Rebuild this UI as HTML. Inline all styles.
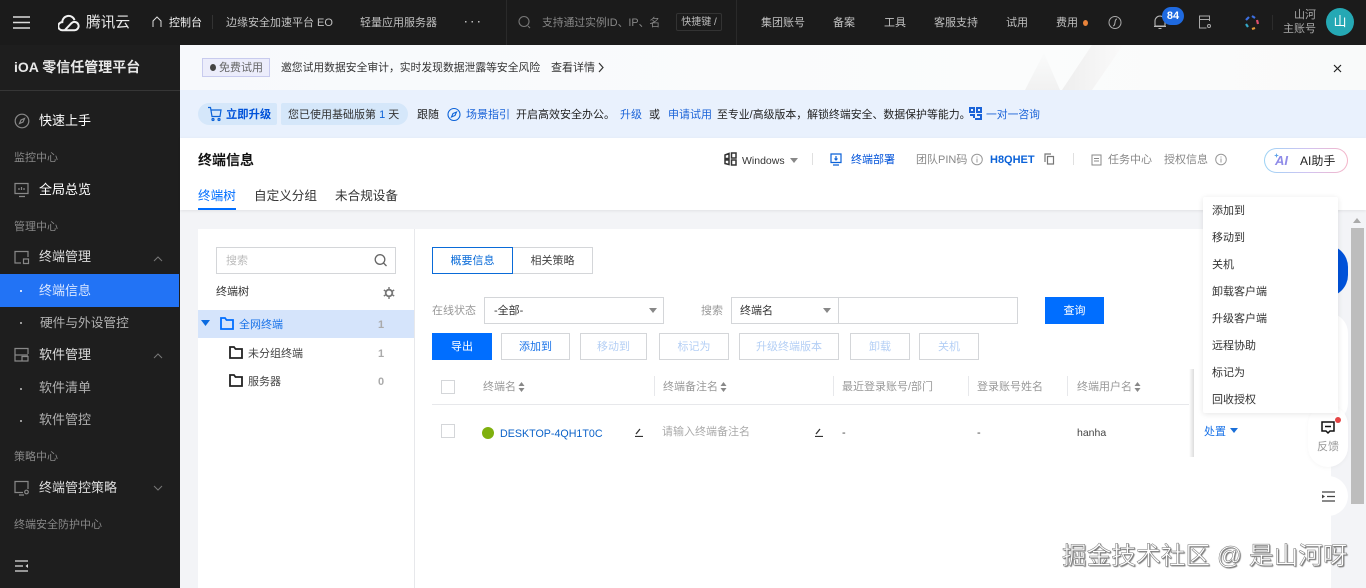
<!DOCTYPE html>
<html lang="zh"><head><meta charset="utf-8"><title>终端信息</title>
<style>
*{box-sizing:border-box}
html,body{margin:0;padding:0;width:1366px;height:588px;overflow:hidden;background:#f3f4f7}
body{position:relative;font-family:"Liberation Sans","Noto Sans CJK SC",sans-serif;font-size:12px;color:#333}
.a,.t,svg.i{position:absolute}
.t{line-height:20px;white-space:nowrap;margin-top:2px}
.s{font-size:14px;color:#fff}.g{color:#888;font-size:11px}
.btn{position:absolute;top:333px;height:27px;border:1px solid #d4d6d9;background:#fff;color:#b4cff5;text-align:center;line-height:26px;font-size:11px;white-space:nowrap}
.hd{color:#999;font-size:11px}
.bl{color:#0052d9}.lb{color:#006eff}
.m{left:1212px;font-size:11px;color:#333}
.nv{top:11px;font-size:11px;color:#c0c0c0}
svg{fill:none;stroke:currentColor}
</style></head><body>
<!-- top bar -->
<div class="a" style="left:0;top:0;width:1366px;height:45px;background:#1b1b1b"></div>
<svg class="i" style="left:13px;top:16px;color:#ddd" width="17" height="13" stroke-width="1.500"><path d="M0 1h17M0 6.500h17M0 12h17"/></svg>
<svg class="i" style="left:58px;top:13px;color:#f1f1f1" width="24" height="19" viewBox="0 0 20 16" stroke-width="1.700"><path d="M3.500 14.500a3.400 3.400 0 0 1 0-6.800A5.300 5.300 0 0 1 13.800 6M3.500 14.500h10.300a3.500 3.500 0 1 0-2.500-6L5.800 14.300"/></svg>
<span class="t" style="left:86px;top:11px;font-size:14.700px;color:#e8e8e8">腾讯云</span>
<svg class="i" style="left:152px;top:16px;color:#ddd" width="10" height="12" stroke-width="1"><path d="M1 11V5l4-4 4 4v6"/></svg>
<span class="t" style="left:169px;top:11px;font-size:11px;color:#f0f0f0">控制台</span>
<div class="a" style="left:212px;top:15px;width:1px;height:14px;background:#333"></div>
<span class="t nv" style="left:226px">边缘安全加速平台 EO</span>
<span class="t nv" style="left:360px">轻量应用服务器</span>
<svg class="i" style="left:465px;top:21px" width="16" height="3"><path d="M0 0h1.500v1.500H0zM6.500 0H8v1.500H6.500zM13 0h1.500v1.500H13z" fill="#bbb" stroke="none"/></svg>
<div class="a" style="left:506px;top:0;width:1px;height:45px;background:#2a2a2a"></div>
<svg class="i" style="left:518px;top:15px;color:#777" width="14" height="15" stroke-width="1.100"><circle cx="6" cy="6.500" r="5"/><path d="M10 11l2 2"/></svg>
<span class="t" style="left:542px;top:11px;font-size:10.800px;color:#888">支持通过实例ID、IP、名</span>
<span class="a" style="left:676px;top:13px;width:46px;height:18px;border:1px solid #333;border-radius:2px;font-size:10px;color:#bbb;line-height:17px;text-align:center;white-space:nowrap">快捷键 /</span>
<div class="a" style="left:736px;top:0;width:1px;height:45px;background:#2a2a2a"></div>
<span class="t nv" style="left:761px">集团账号</span>
<span class="t nv" style="left:833px">备案</span>
<span class="t nv" style="left:884px">工具</span>
<span class="t nv" style="left:934px">客服支持</span>
<span class="t nv" style="left:1006px">试用</span>
<span class="t nv" style="left:1056px">费用</span>
<div class="a" style="left:1083px;top:20px;width:5px;height:6px;border-radius:50%;background:#e8833a"></div>
<svg class="i" style="left:1108px;top:15px;color:#aaa" width="14" height="15" stroke-width="1"><circle cx="7" cy="7.500" r="6"/><path d="M5 11c3 0 1-7 4-7"/></svg>
<svg class="i" style="left:1153px;top:15px;color:#bbb" width="14" height="15" stroke-width="1.100"><path d="M2 11V6a5 5 0 0 1 10 0v5zM1 11.500h12M5.500 13.500h3"/></svg>
<div class="a" style="left:1162px;top:7px;width:22px;height:18px;border-radius:9px;background:#1f6ae0;color:#fff;font-size:11px;font-weight:bold;line-height:18px;text-align:center">84</div>
<svg class="i" style="left:1198px;top:15px;color:#aaa" width="14" height="14" stroke-width="1"><path d="M11.500 6V1h-10v12h7M1.500 4.500h10"/><circle cx="11" cy="11" r="1.500"/></svg>
<svg class="i" style="left:1243px;top:14px" width="17" height="17" stroke-width="2.200"><path d="M9 2l3 2" stroke="#3d6fe0"/><path d="M14 6l1 4" stroke="#e0506e"/><path d="M12 14l-3 1" stroke="#e59a3a"/><path d="M5 13L3 10" stroke="#34a8c9"/><path d="M3 6l3-3" stroke="#3d6fe0"/></svg>
<div class="a" style="left:1272px;top:15px;width:1px;height:15px;background:#2c2c2c"></div>
<span class="t" style="left:1294px;top:6px;font-size:11px;color:#aaa;line-height:14px">山河</span>
<span class="t" style="left:1283px;top:20px;font-size:11px;color:#aaa;line-height:14px">主账号</span>
<div class="a" style="left:1326px;top:8px;width:28px;height:28px;border-radius:50%;background:#25a8b4;color:#fff;font-size:13px;line-height:28px;text-align:center">山</div>
<!-- sidebar -->
<div class="a" style="left:0;top:45px;width:180px;height:543px;background:#1e1e1e"></div>
<span class="t" style="left:14px;top:55px;font-size:14px;font-weight:bold;color:#e8e8e8">iOA 零信任管理平台</span>
<div class="a" style="left:0;top:90px;width:180px;height:1px;background:#363636"></div>
<svg class="i" style="left:14px;top:113px;color:#888" width="16" height="16" stroke-width="1.200"><circle cx="8" cy="8" r="6.800"/><path d="M10.500 5.500l-1.500 3.500-3.500 1.500 1.500-3.500z"/></svg>
<span class="t s" style="left:39px;top:109px;font-size:13px">快速上手</span>
<span class="t g" style="left:14px;top:146px">监控中心</span>
<svg class="i" style="left:14px;top:182px;color:#888" width="16" height="16" stroke-width="1.200"><path d="M1 1.500h13v10H1zM5 14.500h6M5 8V6M7.500 8V5M10 8V6"/></svg>
<span class="t s" style="left:39px;top:178px;font-size:13px">全局总览</span>
<span class="t g" style="left:14px;top:215px">管理中心</span>
<svg class="i" style="left:14px;top:250px;color:#888" width="16" height="15" stroke-width="1.200"><path d="M7 13H1V1.500h13V7M9.500 9h5v4.500h-5z"/></svg>
<span class="t s" style="left:39px;top:245px;font-size:13px;color:#ddd">终端管理</span>
<svg class="i" style="left:153px;top:256px;color:#777" width="10" height="6" stroke-width="1"><path d="M1 5l4-4 4 4"/></svg>
<div class="a" style="left:0;top:274px;width:179px;height:33px;background:#2273f5"></div>
<div class="a" style="left:20px;top:290px;width:2px;height:2px;background:#cfe0ff"></div>
<span class="t s" style="left:39px;top:279px;font-size:13px;color:#d8e6ff">终端信息</span>
<div class="a" style="left:20px;top:322px;width:2px;height:2px;background:#999"></div>
<span class="t s" style="left:40px;top:311px;font-size:12.700px;color:#b0b0b0">硬件与外设管控</span>
<svg class="i" style="left:14px;top:347px;color:#888" width="16" height="15" stroke-width="1.200"><path d="M7 14H1V1.500h13V7M1 8h13M1.500 14h13M8 14V9.500h6V14"/></svg>
<span class="t s" style="left:39px;top:343px;font-size:13px;color:#ddd">软件管理</span>
<svg class="i" style="left:153px;top:353px;color:#777" width="10" height="6" stroke-width="1"><path d="M1 5l4-4 4 4"/></svg>
<div class="a" style="left:20px;top:388px;width:2px;height:2px;background:#999"></div>
<span class="t s" style="left:39px;top:376px;font-size:13px;color:#b0b0b0">软件清单</span>
<div class="a" style="left:20px;top:420px;width:2px;height:2px;background:#999"></div>
<span class="t s" style="left:39px;top:408px;font-size:13px;color:#b0b0b0">软件管控</span>
<span class="t g" style="left:14px;top:445px">策略中心</span>
<svg class="i" style="left:14px;top:480px;color:#888" width="16" height="16" stroke-width="1.200"><path d="M9 12.500H1V1.500h13V9M5 15h5"/><circle cx="12.500" cy="12" r="1.800"/></svg>
<span class="t s" style="left:39px;top:476px;font-size:13px;color:#ddd">终端管控策略</span>
<svg class="i" style="left:153px;top:485px;color:#777" width="10" height="6" stroke-width="1"><path d="M1 1l4 4 4-4"/></svg>
<span class="t g" style="left:14px;top:513px">终端安全防护中心</span>
<svg class="i" style="left:15px;top:560px;color:#ddd" width="14" height="12" stroke-width="1.300"><path d="M0 1h13M0 6h8M0 11h13"/><path d="M13 4l-2.500 2 2.500 2z" fill="currentColor" stroke="none"/></svg>
<!-- notice 1 -->
<div class="a" style="left:180px;top:45px;width:1186px;height:45px;background:linear-gradient(90deg,#f7f9fc 0,#fbfcfc 70%,#f9fafa 100%)"></div>
<svg class="i" style="left:1000px;top:45px" width="200" height="45"><defs><linearGradient id="b"><stop offset="0" stop-color="#eeeeee"/><stop offset="1" stop-color="#fafafa"/></linearGradient><linearGradient id="c" x2="0" y2="1"><stop offset="0" stop-color="#fafbfb"/><stop offset="1" stop-color="#f1f1f1"/></linearGradient></defs><path d="M92 0h31L92 45H62z" fill="url(#b)" stroke="none"/><path d="M44 8l16 37H25z" fill="url(#c)" stroke="none"/></svg>
<div class="a" style="left:202px;top:58px;width:68px;height:19px;background:#ecedfb;border:1px solid #c8cbee"></div>
<div class="a" style="left:210px;top:64px;width:6px;height:7px;border-radius:50%;background:#444"></div>
<span class="t" style="left:219px;top:56px;font-size:11px;color:#666">免费试用</span>
<span class="t" style="left:281px;top:56px;font-size:10.800px;color:#333">邀您试用数据安全审计，实时发现数据泄露等安全风险</span>
<span class="t" style="left:551px;top:56px;color:#333;font-size:11px">查看详情</span>
<svg class="i" style="left:598px;top:62px;color:#333" width="6" height="11" stroke-width="1.200"><path d="M1 1l4 4.500L1 10"/></svg>
<svg class="i" style="left:1333px;top:64px;color:#222" width="9" height="9" stroke-width="1.200"><path d="M1 1l7 7M8 1L1 8"/></svg>
<!-- notice 2 -->
<div class="a" style="left:180px;top:90px;width:1186px;height:48px;background:#e9f1fd"></div>
<div class="a" style="left:198px;top:103px;width:79px;height:22px;background:#d5e7fa;border-radius:11px 2px 2px 11px"></div>
<div class="a" style="left:281px;top:103px;width:127px;height:22px;background:#d5e7fa;border-radius:2px 11px 11px 2px"></div>
<svg class="i" style="left:207px;top:106px;color:#0b62d8" width="15" height="16" stroke-width="1.200"><path d="M1 1.500h2.500l1.500 9h8l1-6.500H4"/><circle cx="6" cy="13.500" r="1"/><circle cx="12" cy="13.500" r="1"/></svg>
<span class="t bl" style="left:226px;top:103px;font-size:11.300px;font-weight:bold">立即升级</span>
<span class="t" style="left:288px;top:103px;font-size:11px;color:#333">您已使用基础版第 <span style="color:#0b62d8">1</span> 天</span>
<span class="t" style="left:417px;top:103px;font-size:11px;color:#222">跟随</span>
<svg class="i" style="left:447px;top:107px;color:#0b62d8" width="14" height="15" stroke-width="1.100"><circle cx="7" cy="7.500" r="6"/><path d="M9.500 5l-1.500 3.500L4.500 10 6 6.500z"/></svg>
<span class="t" style="left:466px;top:103px;font-size:11px;color:#1a63d8">场景指引</span>
<span class="t" style="left:516px;top:103px;font-size:11px;color:#222">开启高效安全办公。</span>
<span class="t" style="left:620px;top:103px;font-size:11px;color:#1a63d8">升级</span>
<span class="t" style="left:649px;top:103px;font-size:11px;color:#222">或</span>
<span class="t" style="left:668px;top:103px;font-size:11px;color:#1a63d8">申请试用</span>
<span class="t" style="left:717px;top:103px;font-size:10.900px;color:#222">至专业/高级版本，解锁终端安全、数据保护等能力。</span>
<svg class="i" style="left:969px;top:107px;color:#1a63d8" width="13" height="14" stroke-width="2"><path d="M1 1h4v4H1zM8 1h4v4H8zM1 8h4v3M8 8h4v4H6"/></svg>
<span class="t" style="left:986px;top:103px;font-size:10.800px;color:#1a63d8">一对一咨询</span>
<!-- header -->
<div class="a" style="left:180px;top:138px;width:1186px;height:72px;background:#fff;box-shadow:0 1px 3px rgba(0,0,0,.08)"></div>
<span class="t" style="left:198px;top:148px;font-size:14px;font-weight:bold;color:#111">终端信息</span>
<span class="t lb" style="left:198px;top:184px;font-size:12.600px">终端树</span>
<div class="a" style="left:198px;top:208px;width:38px;height:2px;background:#006eff"></div>
<span class="t" style="left:254px;top:184px;font-size:12.600px;color:#333">自定义分组</span>
<span class="t" style="left:335px;top:184px;font-size:12.600px;color:#333">未合规设备</span>
<svg class="i" style="left:724px;top:152px;color:#333" width="13" height="14" stroke-width="1.500"><path d="M1 3l4-1.500V6.500H1zM7.500 1H12v5H7.500zM1 8h4v4.500l-4-1zM7.500 8H12v5H7.500z"/></svg>
<span class="t" style="left:742px;top:149px;font-size:10.500px;color:#333">Windows</span>
<svg class="i" style="left:790px;top:158px" width="8" height="5"><path d="M0 0h8L4 5z" fill="#888" stroke="none"/></svg>
<div class="a" style="left:812px;top:153px;width:1px;height:12px;background:#e0e0e0"></div>
<svg class="i" style="left:830px;top:153px;color:#0b62d8" width="12" height="13" stroke-width="1.200"><path d="M1 1h10v8.500H1zM3 12h6M6 3v4M4.500 5.500L6 7l1.500-1.500"/></svg>
<span class="t bl" style="left:851px;top:148px;font-size:11px">终端部署</span>
<span class="t" style="left:916px;top:148px;font-size:11px;color:#888">团队PIN码</span>
<svg class="i" style="left:971px;top:153px;color:#999" width="12" height="13" stroke-width="1"><circle cx="6" cy="6.500" r="5.300"/><path d="M6 5.500v4M6 3.500v1"/></svg>
<span class="t bl" style="left:990px;top:148px;font-size:11px;font-weight:bold;color:#0b62d8">H8QHET</span>
<svg class="i" style="left:1044px;top:153px;color:#777" width="11" height="12" stroke-width="1.200"><path d="M1 9V1h6M3.500 3.500h6v7.500h-6z"/></svg>
<div class="a" style="left:1073px;top:153px;width:1px;height:12px;background:#e0e0e0"></div>
<svg class="i" style="left:1091px;top:154px;color:#888" width="11" height="12" stroke-width="1"><path d="M1 1h9v10H1zM3 4.500h5M3 7h5"/></svg>
<span class="t" style="left:1108px;top:148px;font-size:11px;color:#888">任务中心</span>
<span class="t" style="left:1164px;top:148px;font-size:11px;color:#888">授权信息</span>
<svg class="i" style="left:1215px;top:153px;color:#999" width="12" height="13" stroke-width="1"><circle cx="6" cy="6.500" r="5.300"/><path d="M6 5.500v4M6 3.500v1"/></svg>
<div class="a" style="left:1264px;top:148px;width:84px;height:25px;border-radius:13px;background:linear-gradient(#fff,#fff) padding-box,linear-gradient(90deg,#9cd3f5,#cfc4f2,#f5b5c8) border-box;border:1px solid transparent"></div>
<span class="t" style="left:1275px;top:149px;font-size:13px;font-weight:bold;font-style:italic;color:#8f8be8">AI</span>
<svg class="i" style="left:1274px;top:153px" width="5" height="5"><path d="M2.500 0l.6 1.900L5 2.500l-1.900.6L2.500 5l-.6-1.900L0 2.500l1.900-.6z" fill="#5aa0e8" stroke="none"/></svg>
<span class="t" style="left:1300px;top:149px;font-size:12px;color:#222">AI助手</span>
<!-- panels -->
<div class="a" style="left:198px;top:229px;width:1133px;height:359px;background:#fff"></div>
<div class="a" style="left:414px;top:229px;width:1px;height:359px;background:#e7e8eb"></div>
<!-- tree -->
<div class="a" style="left:216px;top:247px;width:180px;height:27px;border:1px solid #d4d6d9"></div>
<span class="t" style="left:226px;top:249px;font-size:11px;color:#bbb">搜索</span>
<svg class="i" style="left:374px;top:253px;color:#666" width="14" height="15" stroke-width="1.300"><circle cx="6" cy="6.500" r="4.800"/><path d="M9.500 10l3 3"/></svg>
<span class="t" style="left:216px;top:280px;font-size:11px;color:#333">终端树</span>
<svg class="i" style="left:383px;top:287px;color:#777" width="12" height="12" stroke-width="1.800"><circle cx="6" cy="6" r="3.300"/><path d="M6 0v2M6 10v2M.8 3l1.700 1M9.500 8l1.700 1M.8 9l1.700-1M9.500 4l1.700-1" stroke-width="1.400"/></svg>
<div class="a" style="left:198px;top:310px;width:216px;height:28px;background:#d5e4fb"></div>
<svg class="i" style="left:201px;top:320px" width="9" height="6"><path d="M0 0h9L4.500 6z" fill="#0b6be0" stroke="none"/></svg>
<svg class="i" style="left:220px;top:317px;color:#006eff" width="14" height="13" stroke-width="1.800"><path d="M1 12V1h4l1.500 2H13v9z"/></svg>
<span class="t lb" style="left:239px;top:313px;font-size:11px;color:#1a73e8">全网终端</span>
<span class="t" style="left:378px;top:313px;font-size:11px;color:#aaa;font-weight:bold">1</span>
<svg class="i" style="left:229px;top:346px;color:#222" width="14" height="13" stroke-width="1.800"><path d="M1 12V1h4l1.500 2H13v9z"/></svg>
<span class="t" style="left:248px;top:342px;font-size:11px;color:#444">未分组终端</span>
<span class="t" style="left:378px;top:342px;font-size:11px;color:#aaa;font-weight:bold">1</span>
<svg class="i" style="left:229px;top:374px;color:#222" width="14" height="13" stroke-width="1.800"><path d="M1 12V1h4l1.500 2H13v9z"/></svg>
<span class="t" style="left:248px;top:370px;font-size:11px;color:#444">服务器</span>
<span class="t" style="left:378px;top:370px;font-size:11px;color:#aaa;font-weight:bold">0</span>
<!-- main tabs -->
<div class="a" style="left:432px;top:247px;width:81px;height:27px;border:1px solid #0a6bd8;color:#0a6bd8;font-size:11px;line-height:27px;text-align:center">概要信息</div>
<div class="a" style="left:513px;top:247px;width:80px;height:27px;border:1px solid #d4d6d9;border-left:0;color:#444;font-size:11px;line-height:27px;text-align:center">相关策略</div>
<!-- filters -->
<span class="t" style="left:432px;top:299px;font-size:11px;color:#999">在线状态</span>
<div class="a" style="left:484px;top:297px;width:180px;height:27px;border:1px solid #d4d6d9"></div>
<span class="t" style="left:494px;top:299px;font-size:11px;color:#333">-全部-</span>
<svg class="i" style="left:649px;top:308px" width="8" height="5"><path d="M0 0h8L4 5z" fill="#888" stroke="none"/></svg>
<span class="t" style="left:701px;top:299px;font-size:11px;color:#999">搜索</span>
<div class="a" style="left:731px;top:297px;width:287px;height:27px;border:1px solid #d4d6d9"></div>
<div class="a" style="left:838px;top:297px;width:1px;height:27px;background:#d4d6d9"></div>
<span class="t" style="left:740px;top:299px;font-size:11px;color:#333">终端名</span>
<svg class="i" style="left:823px;top:308px" width="8" height="5"><path d="M0 0h8L4 5z" fill="#888" stroke="none"/></svg>
<div class="a" style="left:1045px;top:297px;width:59px;height:27px;background:#006eff;color:#fff;font-size:11px;line-height:28px;text-align:center">查询</div>
<!-- buttons -->
<div class="a" style="left:432px;top:333px;width:60px;height:27px;background:#006eff;color:#fff;font-size:11px;line-height:28px;text-align:center">导出</div>
<div class="btn" style="left:501px;width:69px;color:#1a73e8">添加到</div>
<div class="btn" style="left:580px;width:67px">移动到</div>
<div class="btn" style="left:659px;width:70px">标记为</div>
<div class="btn" style="left:739px;width:100px">升级终端版本</div>
<div class="btn" style="left:850px;width:60px">卸载</div>
<div class="btn" style="left:919px;width:60px">关机</div>
<!-- table -->
<div class="a" style="left:441px;top:380px;width:14px;height:14px;border:1px solid #d4d6d9"></div>
<span class="t hd" style="left:483px;top:375px">终端名</span>
<svg class="i" style="left:518px;top:382px" width="7" height="10"><path d="M3.500 0L6.500 4h-6zM3.500 10L.5 6h6z" fill="#888" stroke="none"/></svg>
<div class="a" style="left:654px;top:376px;width:1px;height:20px;background:#e7e8eb"></div>
<span class="t hd" style="left:663px;top:375px">终端备注名</span>
<svg class="i" style="left:720px;top:382px" width="7" height="10"><path d="M3.500 0L6.500 4h-6zM3.500 10L.5 6h6z" fill="#888" stroke="none"/></svg>
<div class="a" style="left:833px;top:376px;width:1px;height:20px;background:#e7e8eb"></div>
<span class="t hd" style="left:842px;top:375px">最近登录账号/部门</span>
<div class="a" style="left:968px;top:376px;width:1px;height:20px;background:#e7e8eb"></div>
<span class="t hd" style="left:977px;top:375px">登录账号姓名</span>
<div class="a" style="left:1067px;top:376px;width:1px;height:20px;background:#e7e8eb"></div>
<span class="t hd" style="left:1077px;top:375px">终端用户名</span>
<svg class="i" style="left:1134px;top:382px" width="7" height="10"><path d="M3.500 0L6.500 4h-6zM3.500 10L.5 6h6z" fill="#888" stroke="none"/></svg>
<div class="a" style="left:432px;top:404px;width:760px;height:1px;background:#e7e8eb"></div>
<div class="a" style="left:1189px;top:369px;width:5px;height:88px;background:linear-gradient(90deg,#fff,#ddd)"></div>
<div class="a" style="left:441px;top:424px;width:14px;height:14px;border:1px solid #d4d6d9"></div>
<div class="a" style="left:482px;top:427px;width:12px;height:12px;border-radius:50%;background:#7fb00e"></div>
<span class="t bl" style="left:500px;top:422px;font-size:10.700px;color:#0b62c8">DESKTOP-4QH1T0C</span>
<svg class="i" style="left:634px;top:427px;color:#333" width="10" height="10" stroke-width="1.300"><path d="M1 9.500h8M2 7l4-5"/></svg>
<span class="t" style="left:662px;top:420px;font-size:11px;color:#aaa">请输入终端备注名</span>
<svg class="i" style="left:814px;top:427px;color:#333" width="10" height="10" stroke-width="1.300"><path d="M1 9.500h8M2 7l4-5"/></svg>
<span class="t" style="left:842px;top:421px;font-size:11px;color:#444">-</span>
<span class="t" style="left:977px;top:421px;font-size:11px;color:#444">-</span>
<span class="t" style="left:1077px;top:421px;font-size:10.500px;color:#444">hanha</span>
<span class="t lb" style="left:1204px;top:420px;font-size:11px;color:#1a73e8">处置</span>
<svg class="i" style="left:1230px;top:428px" width="8" height="5"><path d="M0 0h8L4 5z" fill="#1a6fd8" stroke="none"/></svg>
<!-- scrollbar -->
<div class="a" style="left:1351px;top:228px;width:13px;height:276px;background:#bdbdbd"></div>
<svg class="i" style="left:1353px;top:218px" width="8" height="5"><path d="M4 0l4 5H0z" fill="#aaa" stroke="none"/></svg>
<!-- floats -->
<div class="a" style="left:1300px;top:245px;width:48px;height:52px;border-radius:22px;background:#0052d9"></div>
<div class="a" style="left:1308px;top:313px;width:40px;height:110px;border-radius:20px;background:#fff"></div>
<div class="a" style="left:1308px;top:405px;width:40px;height:62px;border-radius:20px;background:#fff;box-shadow:0 1px 4px rgba(0,0,0,.04)"></div>
<svg class="i" style="left:1321px;top:421px;color:#111" width="14" height="14" stroke-width="1.500"><path d="M1 1h12v9H9l-2 2-2-2H1zM4 5.500h6"/></svg>
<div class="a" style="left:1335px;top:417px;width:6px;height:6px;border-radius:50%;background:#e54545"></div>
<span class="t" style="left:1317px;top:435px;font-size:11px;color:#999">反馈</span>
<div class="a" style="left:1308px;top:476px;width:40px;height:40px;border-radius:50%;background:#fff"></div>
<svg class="i" style="left:1322px;top:491px;color:#444" width="13" height="11" stroke-width="1.300"><path d="M0 1h13M5 5.500h8M0 10h13"/><path d="M0 3.500l3 2-3 2z" fill="currentColor" stroke="none"/></svg>
<!-- dropdown -->
<div class="a" style="left:1203px;top:197px;width:135px;height:216px;background:#fff;border-radius:2px;box-shadow:0 1px 6px rgba(0,0,0,.1)"></div>
<span class="t m" style="top:199px">添加到</span>
<span class="t m" style="top:226px">移动到</span>
<span class="t m" style="top:253px">关机</span>
<span class="t m" style="top:280px">卸载客户端</span>
<span class="t m" style="top:307px">升级客户端</span>
<span class="t m" style="top:334px">远程协助</span>
<span class="t m" style="top:361px">标记为</span>
<span class="t m" style="top:388px">回收授权</span>
<!-- watermark -->
<span class="t" style="left:1062px;top:540px;font-size:24.700px;line-height:30px;color:#fff;-webkit-text-stroke:.5px #777;text-shadow:1px 1px 1px #777">掘金技术社区 @ 是山河呀</span>
</body></html>
